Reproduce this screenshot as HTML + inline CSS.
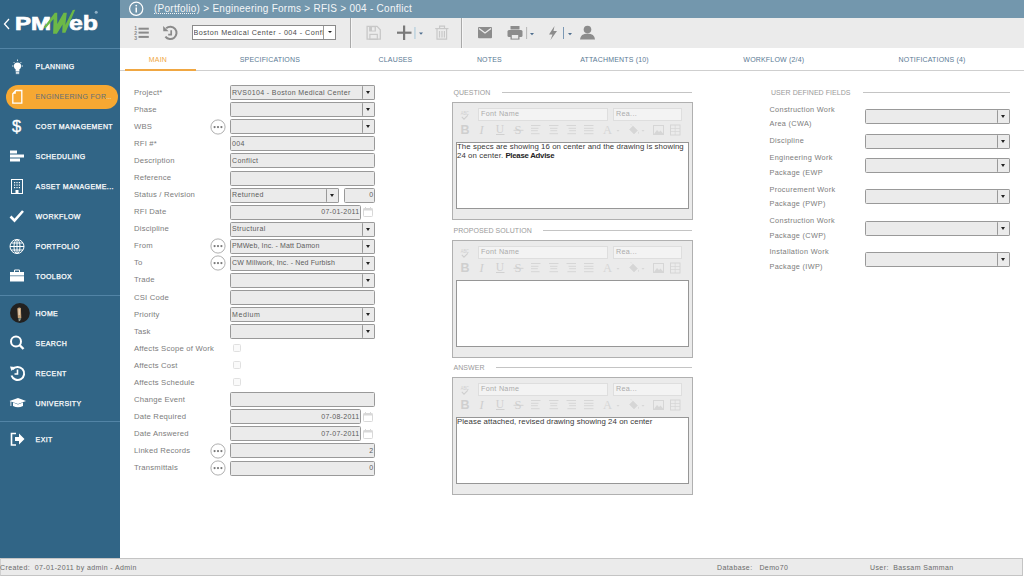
<!DOCTYPE html>
<html><head><meta charset="utf-8"><title>PMWeb RFI</title>
<style>
*{box-sizing:border-box;margin:0;padding:0}
html,body{width:1024px;height:576px;overflow:hidden;background:#fff;font-family:"Liberation Sans",sans-serif;}
.abs{position:absolute}
#side{position:absolute;left:0;top:0;width:120px;height:558px;background:#316586}
.hr{position:absolute;left:0;width:120px;height:1px;background:#5284a6}
.mi{position:absolute;left:35.6px;font-size:7px;font-weight:normal;-webkit-text-stroke:0.25px #fff;color:#fff;letter-spacing:0.4px;white-space:nowrap;line-height:10px}
.ic{position:absolute}
#hdr{position:absolute;left:120px;top:0;width:904px;height:18px;background:#7397ad}
#tb{position:absolute;left:120px;top:18px;width:904px;height:30px;background:#ebebeb}
#tabs{position:absolute;left:120px;top:48px;width:904px;height:23px;background:#fff;border-bottom:1px solid #cfcfcf}
.tab{position:absolute;top:54.7px;font-size:7px;color:#5a7a94;letter-spacing:0.18px;white-space:nowrap;line-height:10px}
.lbl{position:absolute;left:134px;font-size:7.7px;color:#7c7c7c;white-space:nowrap;line-height:10px;letter-spacing:0.2px}
.inp{position:absolute;height:15px;background:#ebebeb;border:1px solid #999;border-radius:1.5px}
.inp span{position:absolute;left:1px;top:1.6px;font-size:7px;color:#5c5c5c;line-height:10px;white-space:nowrap;letter-spacing:0.38px}
.inp span.r{left:auto;right:0.5px;letter-spacing:0.3px}
.dd{position:absolute;top:-1px;right:-1px;width:13px;height:15px;border:1px solid #999;border-radius:1.5px}
.dd:after{content:"";position:absolute;left:3.2px;top:5px;border-left:2.8px solid transparent;border-right:2.8px solid transparent;border-top:3px solid #222}
.ell{position:absolute;left:211px;width:15px;height:15px;border:1px solid #b4b4b4;border-radius:50%;background:#fff}
.ell i{position:absolute;top:5.6px;width:2.1px;height:2.1px;border-radius:50%;background:#7a7a7a}
.cb{position:absolute;left:233px;width:8px;height:8px;border:1px solid #e0e0e0;border-radius:1.5px;background:#fafafa}
.cal{position:absolute;left:363px;width:10px;height:10px}
.sec{position:absolute;font-size:7px;color:#9a9a9a;letter-spacing:0.05px;white-space:nowrap;line-height:10px}
.secl{position:absolute;height:1px;background:#c4c4c4}
.ed{position:absolute;left:452px;width:241px;height:118px;background:#ebebeb;border:1px solid #b0b0b0}
.fn{position:absolute;top:5px;height:13px;border:1px solid #dedede;background:#f3f3f3;font-size:7.2px;color:#acacac;line-height:10.6px;padding-left:2px;white-space:nowrap;letter-spacing:0.3px}
.ta{position:absolute;left:3px;top:38.5px;width:233px;height:67px;background:#fff;border:1px solid #969696}
.ta p{position:absolute;left:0px;top:0.6px;font-size:7.8px;line-height:8.75px;color:#383838;white-space:nowrap;letter-spacing:0.08px}
.udl{position:absolute;left:769.5px;font-size:7.3px;color:#7c7c7c;white-space:nowrap;line-height:14.5px;letter-spacing:0.33px}
#foot{position:absolute;left:0;top:558px;width:1023px;height:18px;background:#ebebeb;border:1px solid #c4c4c4;border-left-color:#d0d0d0}
.ft{position:absolute;top:5px;font-size:7px;color:#6a6a6a;white-space:nowrap;line-height:9px;letter-spacing:0.4px}
</style></head><body>

<div id="side">
<svg class="abs" style="left:0;top:0" width="120" height="48" viewBox="0 0 120 48">
<path d="M9 19 L4.5 24 L9 29" fill="none" stroke="#fff" stroke-width="1.3"/>
<text x="15" y="29.7" font-family="Liberation Sans" font-weight="bold" font-size="18.3" fill="#fff" stroke="#fff" stroke-width="0.7" textLength="36" lengthAdjust="spacingAndGlyphs">PM</text>
<text x="69" y="29.7" font-family="Liberation Sans" font-weight="bold" font-size="20.5" fill="#fff" stroke="#fff" stroke-width="0.6" textLength="29" lengthAdjust="spacingAndGlyphs">eb</text>
<path d="M43.8 27.2 L54.8 12.8 L57.2 12.8 L57.3 24 L63.6 12.8 L66.8 12.8 L65.3 25 L72.8 10 L75.2 9.8 L65.4 32.8 L62.2 32.8 L62.6 24.5 L56.9 33.8 L53.1 33.8 L53.6 19 L45.4 28.4 Z" fill="#6cb847"/>
<circle cx="96.2" cy="12.2" r="1.5" fill="#8fb0c6"/>
</svg>
<div class="hr" style="top:48px"></div>
<div class="abs" style="left:6px;top:85px;width:112px;height:24px;border-radius:12px;background:#f6a832"></div>
<div class="mi" style="top:62.0px;color:#fff;">PLANNING</div>
<div class="mi" style="top:92.0px;color:#667078;-webkit-text-stroke:0.05px #667078;letter-spacing:0.33px;">ENGINEERING FOR<span style="color:#f3e6d0;letter-spacing:-0.3px">...</span></div>
<div class="mi" style="top:122.0px;color:#fff;">COST MANAGEMENT</div>
<div class="mi" style="top:152.0px;color:#fff;">SCHEDULING</div>
<div class="mi" style="top:182.0px;color:#fff;">ASSET MANAGEME...</div>
<div class="mi" style="top:212.0px;color:#fff;">WORKFLOW</div>
<div class="mi" style="top:242.0px;color:#fff;">PORTFOLIO</div>
<div class="mi" style="top:272.0px;color:#fff;">TOOLBOX</div>
<div class="mi" style="top:308.5px;color:#fff;">HOME</div>
<div class="mi" style="top:338.5px;color:#fff;">SEARCH</div>
<div class="mi" style="top:368.5px;color:#fff;">RECENT</div>
<div class="mi" style="top:398.5px;color:#fff;">UNIVERSITY</div>
<div class="mi" style="top:435.0px;color:#fff;">EXIT</div>
<div class="hr" style="top:295px"></div>
<div class="hr" style="top:421px"></div>
<svg class="abs" style="left:0;top:0" width="120" height="460" viewBox="0 0 120 460">
<g fill="#fff" stroke="none">
<!-- bulb -->
<circle cx="17.5" cy="66" r="3.6"/>
<rect x="15.6" y="68" width="3.8" height="3.5"/>
<rect x="15.8" y="72" width="3.4" height="0.8"/><rect x="15.8" y="73.3" width="3.4" height="0.8"/>
<g stroke="#fff" stroke-width="0.8"><path d="M17.5 59.5v1.6M12 66h1.5M21.5 66H23M13.6 62l1 1M21.4 62l-1 1"/></g>
<!-- doc -->
<path d="M15.8 90.5 h6 v12.6 h-9 v-9.3 z" fill="none" stroke="#fff" stroke-width="1.3" stroke-linejoin="miter"/><path d="M12.8 93.8 h3 v-3.3 z" fill="#fff"/>
<!-- $ -->
<text x="12" y="132" font-family="Liberation Sans" font-size="16.5" fill="#fff" stroke="#fff" stroke-width="0.35">$</text>
<!-- scheduling -->
<rect x="10" y="150.5" width="7" height="3"/><rect x="10" y="154.5" width="14" height="3"/><rect x="10" y="158.5" width="10" height="3"/>
<!-- asset building -->
<rect x="11.5" y="179.5" width="11" height="14" fill="none" stroke="#fff" stroke-width="1"/>
<g fill="#fff"><rect x="14" y="182" width="1.2" height="1.2"/><rect x="16.4" y="182" width="1.2" height="1.2"/><rect x="18.8" y="182" width="1.2" height="1.2"/>
<rect x="14" y="184.5" width="1.2" height="1.2"/><rect x="16.4" y="184.5" width="1.2" height="1.2"/><rect x="18.8" y="184.5" width="1.2" height="1.2"/>
<rect x="14" y="187" width="1.2" height="1.2"/><rect x="16.4" y="187" width="1.2" height="1.2"/><rect x="18.8" y="187" width="1.2" height="1.2"/>
<rect x="15.5" y="190" width="3" height="3.5"/></g>
<!-- check -->
<path d="M10.5 216.5 L14.5 220.5 L23 211" fill="none" stroke="#fff" stroke-width="2.6"/>
<!-- globe -->
<g fill="none" stroke="#fff" stroke-width="1"><circle cx="17" cy="246.5" r="7"/><ellipse cx="17" cy="246.5" rx="3" ry="7"/><path d="M10 246.5h14M11 243h12M11 250h12M17 239.5v14"/></g>
<!-- toolbox -->
<rect x="10" y="272" width="14" height="9.5"/><path d="M14.5 272v-2h5v2" fill="none" stroke="#fff" stroke-width="1"/>
<rect x="10" y="275.5" width="14" height="0.7" fill="#316586"/>
<!-- home avatar -->
<circle cx="19.9" cy="313" r="9.9" fill="#222120"/>
<path d="M17.3 308.5 q1.8-1.6 3.6 -0.4 l0.4 10 h-3.4 z" fill="#c8a57c"/>
<path d="M18.5 309 h1.5 v6 h-1.5z" fill="#e2cdb4"/>
<path d="M18.3 318.3 h3 l-1 2 l-1.5 1.3 z" fill="#8a9a90"/>
<!-- search -->
<circle cx="16" cy="341.5" r="5" fill="none" stroke="#fff" stroke-width="2"/><path d="M19.5 345 L23.5 349" stroke="#fff" stroke-width="2.4"/>
<!-- recent -->
<path d="M12.5 369.5 A6.5 6.5 0 1 1 11.5 375.5" fill="none" stroke="#fff" stroke-width="2"/>
<path d="M10 366.5 L15 367 L11.5 371 z"/>
<path d="M17.5 369.5 v4.5 h-3" fill="none" stroke="#fff" stroke-width="1.6"/>
<!-- university -->
<path d="M9.5 401 L18 398 L26 401 L18 404 z"/><path d="M13 402.5 v3.5 q5 2.5 10 0 v-3.5 l-5 2 z"/><rect x="10.5" y="401" width="0.8" height="5"/>
<!-- exit -->
<path d="M16 433.5 h-4.5 v11.5 h4.5" fill="none" stroke="#fff" stroke-width="1.6"/>
<path d="M15 437 h4 v-3.5 l5.5 5.5 l-5.5 5.5 v-3.5 h-4 z"/>
</g></svg>
</div>
<div id="hdr"></div>
<svg class="abs" style="left:128px;top:1px" width="16" height="16" viewBox="0 0 16 16"><circle cx="8.2" cy="7.8" r="6.6" fill="none" stroke="#fff" stroke-width="1.2"/><rect x="7.5" y="6.5" width="1.5" height="5" fill="#fff"/><circle cx="8.25" cy="4.6" r="0.9" fill="#fff"/></svg>
<div class="abs" style="left:154px;top:3.2px;font-size:10px;line-height:12px;color:#f4f6f8;white-space:nowrap;letter-spacing:0.26px"><span style="text-decoration:underline dotted;text-underline-offset:1px">(Portfolio)</span> &gt; Engineering Forms &gt; RFIS &gt; 004 - Conflict</div>
<div id="tb"></div>
<svg class="abs" style="left:120px;top:18px" width="904" height="30" viewBox="120 18 904 30">
<!-- numbered list -->
<g fill="#8a8a8a"><rect x="138.5" y="27.7" width="10.3" height="2"/><rect x="138.5" y="31.6" width="10.3" height="2"/><rect x="138.5" y="35.9" width="10.3" height="2"/>
<g font-family="Liberation Sans" font-weight="bold" font-size="5.6"><text x="134.3" y="30" textLength="2.8" lengthAdjust="spacingAndGlyphs">1</text><text x="134.3" y="34.9" textLength="2.8" lengthAdjust="spacingAndGlyphs">2</text><text x="134.3" y="39.9" textLength="2.8" lengthAdjust="spacingAndGlyphs">3</text></g></g>
<!-- history -->
<path d="M166.2 28.2 A6.2 6.2 0 1 1 165.4 36.6" fill="none" stroke="#8a8a8a" stroke-width="2"/>
<path d="M163.1 25.9 L163.3 31.3 L168.6 31.3 z" fill="#8a8a8a"/>
<path d="M171.2 30.2 V34.6 H168.2" fill="none" stroke="#8a8a8a" stroke-width="1.7"/>
<!-- separators -->
<rect x="350" y="18" width="1" height="30" fill="#a9a9a9"/><rect x="351" y="18" width="1" height="30" fill="#f6f6f6"/>
<rect x="461" y="18" width="1" height="30" fill="#a9a9a9"/><rect x="462" y="18" width="1" height="30" fill="#f6f6f6"/>
<!-- save -->
<path d="M367.1 26.3 h10 l3.2 3.4 v9.4 h-13.2 z" fill="none" stroke="#c8c8c8" stroke-width="1.3"/>
<rect x="369.1" y="26.3" width="6.8" height="5.2" fill="#c8c8c8"/><rect x="372" y="27.2" width="2.6" height="3.4" fill="#ececec"/>
<rect x="369.9" y="34.4" width="7.4" height="5" fill="none" stroke="#c8c8c8" stroke-width="1.2"/>
<!-- plus -->
<rect x="403" y="25.5" width="2.2" height="14.5" fill="#7a7a7a"/><rect x="397" y="31.6" width="14.5" height="2.2" fill="#7a7a7a"/>
<rect x="414.5" y="27" width="0.9" height="12" fill="#9fc4d8"/>
<path d="M419 32.5 h4 l-2 2.2 z" fill="#4f6f8f"/>
<!-- trash -->
<g fill="none" stroke="#c8c8c8" stroke-width="1.2"><path d="M435.2 28.6 h13.3"/><path d="M439.6 28.6 v-2.4 h4.9 v2.4"/><path d="M437 29 v10.2 h9.6 v-10.2"/><path d="M439.5 31 v6.6 M442 31 v6.6 M444.4 31 v6.6"/></g>
<!-- mail -->
<rect x="478" y="27" width="14" height="11.2" rx="1" fill="#8c8c8c"/>
<path d="M479 28.5 L485 33 L491 28.5" fill="none" stroke="#ebebeb" stroke-width="1.3"/>
<!-- printer -->
<rect x="510.5" y="26" width="9" height="3.5" fill="#8c8c8c"/>
<rect x="507.5" y="30" width="15" height="7" rx="1.5" fill="#8c8c8c"/>
<rect x="510.5" y="34" width="9" height="5.6" fill="#8c8c8c"/><rect x="511.8" y="35" width="6.4" height="3.6" fill="#ebebeb"/>
<rect x="526.2" y="27" width="0.9" height="12" fill="#b0b0b0"/>
<path d="M530 33 h4 l-2 2.2 z" fill="#4f6f8f"/>
<!-- bolt -->
<path d="M554.5 26 L549 34.5 h3.5 L550.5 40 L557 31 h-3.5 z" fill="#8c8c8c"/>
<rect x="563.1" y="27" width="0.9" height="12" fill="#6f8fae"/>
<path d="M568 33 h4 l-2 2.2 z" fill="#4f6f8f"/>
<!-- person -->
<circle cx="587.5" cy="29.5" r="3.8" fill="#8c8c8c"/>
<path d="M580 39.6 q0.5-6 7.5-6 q7 0 7.5 6 z" fill="#8c8c8c"/>
</svg>
<div class="abs" style="left:192px;top:25px;width:144px;height:15px;background:#fff;border:1px solid #8a8a8a"><span style="position:absolute;left:0.5px;top:2.2px;font-size:7.2px;line-height:10px;color:#4a4a4a;white-space:nowrap;letter-spacing:0.47px;width:130px;overflow:hidden">Boston Medical Center - 004 - Conflict</span><div style="position:absolute;right:0;top:0;width:12px;height:13px;border-left:1px solid #999;background:#fff"></div><div style="position:absolute;right:3.5px;top:5px;border-left:2.3px solid transparent;border-right:2.3px solid transparent;border-top:2.8px solid #222"></div></div>
<div id="tabs"></div>
<div class="abs" style="left:125px;top:69px;width:71px;height:2px;background:#f0a742"></div>
<div class="tab" style="left:57.900000000000006px;width:200px;text-align:center;color:#f0a742;">MAIN</div>
<div class="tab" style="left:169.89999999999998px;width:200px;text-align:center;">SPECIFICATIONS</div>
<div class="tab" style="left:295.5px;width:200px;text-align:center;">CLAUSES</div>
<div class="tab" style="left:389.4px;width:200px;text-align:center;">NOTES</div>
<div class="tab" style="left:514.5px;width:200px;text-align:center;">ATTACHMENTS (10)</div>
<div class="tab" style="left:673.8px;width:200px;text-align:center;">WORKFLOW (2/4)</div>
<div class="tab" style="left:832.1px;width:200px;text-align:center;">NOTIFICATIONS (4)</div>
<div class="lbl" style="top:87.8px">Project*</div>
<div class="inp" style="left:230px;top:85.2px;width:145px"><span class="" style="">RVS0104 - Boston Medical Center</span><div class="dd"></div></div>
<div class="lbl" style="top:104.86px">Phase</div>
<div class="inp" style="left:230px;top:102.26px;width:145px"><div class="dd"></div></div>
<div class="lbl" style="top:121.91999999999999px">WBS</div>
<svg class="abs" style="left:210.1px;top:118.72px" width="16" height="16" viewBox="0 0 16 16"><circle cx="8" cy="8" r="7.1" fill="#fff" stroke="#b0b0b0" stroke-width="1"/><g fill="#787878"><circle cx="4.6" cy="8.1" r="1.1"/><circle cx="8" cy="8.1" r="1.1"/><circle cx="11.4" cy="8.1" r="1.1"/></g></svg>
<div class="inp" style="left:230px;top:119.32px;width:145px"><div class="dd"></div></div>
<div class="lbl" style="top:138.98px">RFI #*</div>
<div class="inp" style="left:230px;top:136.38px;width:145px"><span class="" style="">004</span></div>
<div class="lbl" style="top:156.04px">Description</div>
<div class="inp" style="left:230px;top:153.44px;width:145px"><span class="" style="">Conflict</span></div>
<div class="lbl" style="top:173.1px">Reference</div>
<div class="inp" style="left:230px;top:170.5px;width:145px"></div>
<div class="lbl" style="top:190.16px">Status / Revision</div>
<div class="inp" style="left:230px;top:187.56px;width:109px"><span class="" style="">Returned</span><div class="dd"></div></div>
<div class="inp" style="left:344px;top:187.56px;width:31px"><span class="r" style="right:0.5px">0</span></div>
<div class="lbl" style="top:207.22px">RFI Date</div>
<div class="inp" style="left:230px;top:204.62px;width:131px"><span class="r" style="right:0.5px">07-01-2011</span></div>
<svg class="cal" style="top:207.42000000000002px" width="10" height="10" viewBox="0 0 10 10"><rect x="0.5" y="1.5" width="9" height="8" rx="0.8" fill="#fff" stroke="#d8d8d8" stroke-width="1"/><rect x="0.5" y="1.5" width="9" height="2" fill="#d8d8d8"/><rect x="2" y="0" width="1" height="2.5" fill="#d8d8d8"/><rect x="7" y="0" width="1" height="2.5" fill="#d8d8d8"/></svg>
<div class="lbl" style="top:224.28px">Discipline</div>
<div class="inp" style="left:230px;top:221.68px;width:145px"><span class="" style="">Structural</span><div class="dd"></div></div>
<div class="lbl" style="top:241.34px">From</div>
<svg class="abs" style="left:210.1px;top:238.14000000000001px" width="16" height="16" viewBox="0 0 16 16"><circle cx="8" cy="8" r="7.1" fill="#fff" stroke="#b0b0b0" stroke-width="1"/><g fill="#787878"><circle cx="4.6" cy="8.1" r="1.1"/><circle cx="8" cy="8.1" r="1.1"/><circle cx="11.4" cy="8.1" r="1.1"/></g></svg>
<div class="inp" style="left:230px;top:238.74px;width:145px"><span class="" style="letter-spacing:0.13px;">PMWeb, Inc. - Matt Damon</span><div class="dd"></div></div>
<div class="lbl" style="top:258.40000000000003px">To</div>
<svg class="abs" style="left:210.1px;top:255.20000000000002px" width="16" height="16" viewBox="0 0 16 16"><circle cx="8" cy="8" r="7.1" fill="#fff" stroke="#b0b0b0" stroke-width="1"/><g fill="#787878"><circle cx="4.6" cy="8.1" r="1.1"/><circle cx="8" cy="8.1" r="1.1"/><circle cx="11.4" cy="8.1" r="1.1"/></g></svg>
<div class="inp" style="left:230px;top:255.8px;width:145px"><span class="" style="letter-spacing:0.15px;">CW Millwork, Inc. - Ned Furbish</span><div class="dd"></div></div>
<div class="lbl" style="top:275.46000000000004px">Trade</div>
<div class="inp" style="left:230px;top:272.86px;width:145px"><div class="dd"></div></div>
<div class="lbl" style="top:292.52000000000004px">CSI Code</div>
<div class="inp" style="left:230px;top:289.92px;width:145px"></div>
<div class="lbl" style="top:309.58000000000004px">Priority</div>
<div class="inp" style="left:230px;top:306.98px;width:145px"><span class="" style="letter-spacing:0.6px;">Medium</span><div class="dd"></div></div>
<div class="lbl" style="top:326.64000000000004px">Task</div>
<div class="inp" style="left:230px;top:324.04px;width:145px"><div class="dd"></div></div>
<div class="lbl" style="top:343.70000000000005px">Affects Scope of Work</div>
<div class="cb" style="top:344.1px"></div>
<div class="lbl" style="top:360.76000000000005px">Affects Cost</div>
<div class="cb" style="top:361.16px"></div>
<div class="lbl" style="top:377.82000000000005px">Affects Schedule</div>
<div class="cb" style="top:378.22px"></div>
<div class="lbl" style="top:394.88px">Change Event</div>
<div class="inp" style="left:230px;top:392.28px;width:145px"></div>
<div class="lbl" style="top:411.94px">Date Required</div>
<div class="inp" style="left:230px;top:409.34px;width:131px"><span class="r" style="right:0.5px">07-08-2011</span></div>
<svg class="cal" style="top:412.14px" width="10" height="10" viewBox="0 0 10 10"><rect x="0.5" y="1.5" width="9" height="8" rx="0.8" fill="#fff" stroke="#d8d8d8" stroke-width="1"/><rect x="0.5" y="1.5" width="9" height="2" fill="#d8d8d8"/><rect x="2" y="0" width="1" height="2.5" fill="#d8d8d8"/><rect x="7" y="0" width="1" height="2.5" fill="#d8d8d8"/></svg>
<div class="lbl" style="top:429.0px">Date Answered</div>
<div class="inp" style="left:230px;top:426.4px;width:131px"><span class="r" style="right:0.5px">07-07-2011</span></div>
<svg class="cal" style="top:429.2px" width="10" height="10" viewBox="0 0 10 10"><rect x="0.5" y="1.5" width="9" height="8" rx="0.8" fill="#fff" stroke="#d8d8d8" stroke-width="1"/><rect x="0.5" y="1.5" width="9" height="2" fill="#d8d8d8"/><rect x="2" y="0" width="1" height="2.5" fill="#d8d8d8"/><rect x="7" y="0" width="1" height="2.5" fill="#d8d8d8"/></svg>
<div class="lbl" style="top:446.06px">Linked Records</div>
<svg class="abs" style="left:210.1px;top:442.85999999999996px" width="16" height="16" viewBox="0 0 16 16"><circle cx="8" cy="8" r="7.1" fill="#fff" stroke="#b0b0b0" stroke-width="1"/><g fill="#787878"><circle cx="4.6" cy="8.1" r="1.1"/><circle cx="8" cy="8.1" r="1.1"/><circle cx="11.4" cy="8.1" r="1.1"/></g></svg>
<div class="inp" style="left:230px;top:443.46px;width:145px"><span class="r" style="right:0.5px">2</span></div>
<div class="lbl" style="top:463.12px">Transmittals</div>
<svg class="abs" style="left:210.1px;top:459.91999999999996px" width="16" height="16" viewBox="0 0 16 16"><circle cx="8" cy="8" r="7.1" fill="#fff" stroke="#b0b0b0" stroke-width="1"/><g fill="#787878"><circle cx="4.6" cy="8.1" r="1.1"/><circle cx="8" cy="8.1" r="1.1"/><circle cx="11.4" cy="8.1" r="1.1"/></g></svg>
<div class="inp" style="left:230px;top:460.52px;width:145px"><span class="r" style="right:0.5px">0</span></div>
<div class="sec" style="left:453.5px;top:87.6px">QUESTION</div>
<div class="secl" style="left:502px;top:92px;width:190px"></div>
<div class="ed" style="top:102px">
<div class="fn" style="left:25px;width:130px">Font Name</div>
<div class="fn" style="left:160px;width:69px">Rea...</div>
<svg class="abs" style="left:0;top:0" width="241" height="40" viewBox="452 0 241 40"><g fill="#cfcfcf" font-family="Liberation Serif"><text x="459.8" y="11.5" font-size="4.6" font-family="Liberation Sans" textLength="8" lengthAdjust="spacingAndGlyphs">ABC</text><path d="M460.8 13.8 l2.2 2.3 l3.8-3.8" fill="none" stroke="#cfcfcf" stroke-width="1.1"/><text x="459.5" y="31" font-size="12.5" font-weight="bold" font-family="Liberation Sans">B</text><text x="478.5" y="31" font-size="12.5" font-style="italic">I</text><text x="494.8" y="29.5" font-size="11.5">U</text><rect x="495" y="31" width="8.5" height="0.9"/><text x="513.5" y="31.3" font-size="12.5">S</text><rect x="512.5" y="26.8" width="10" height="0.9"/></g><g fill="#d6d6d6">
<rect x="530" y="22" width="9.5" height="1"/>
<rect x="530" y="24.8" width="7.5" height="1"/>
<rect x="530" y="27.2" width="6.8" height="1"/>
<rect x="530" y="30.2" width="8.6" height="1"/>
<rect x="548.0" y="22" width="9.5" height="1"/>
<rect x="549.0" y="24.8" width="7.5" height="1"/>
<rect x="549.35" y="27.2" width="6.8" height="1"/>
<rect x="548.45" y="30.2" width="8.6" height="1"/>
<rect x="565.5" y="22" width="9.5" height="1"/>
<rect x="567.5" y="24.8" width="7.5" height="1"/>
<rect x="568.2" y="27.2" width="6.8" height="1"/>
<rect x="566.4" y="30.2" width="8.6" height="1"/>
<rect x="583" y="22" width="9.5" height="1"/>
<rect x="583" y="24.8" width="9.5" height="1"/>
<rect x="583" y="27.2" width="9.5" height="1"/>
<rect x="583" y="30.2" width="9.5" height="1"/>
<text x="602" y="31" font-size="12.5" font-family="Liberation Serif">A</text><path d="M615.5 27 h3 l-1.5 1.8z"/><path d="M628.5 26.5 l3.5-3.5 l4.5 4.5 l-3.5 3.5 z M631 22.5 l-1.5-1.5" stroke="#d6d6d6" stroke-width="0.6"/><path d="M637.5 28.5 q1 1.5 0 2.5 q-1-1 0-2.5z"/><path d="M640.5 27 h3 l-1.5 1.8z"/><rect x="652.5" y="22.5" width="10" height="9" fill="none" stroke="#d6d6d6" stroke-width="1"/><path d="M653 31 l3-4 l2 2 l1.5-1.5 l3 3.5z"/><rect x="669.5" y="22" width="9.5" height="10" fill="none" stroke="#d6d6d6" stroke-width="1"/><path d="M669.5 25.5h9.5M669.5 28.5h9.5M674.2 22v10" stroke="#d6d6d6" stroke-width="0.7" fill="none"/></g></svg>
<div class="ta"><p>The specs are showing 16 on center and the drawing is showing<br>24 on center. <b style="letter-spacing:-0.25px;color:#222">Please Advise</b></p></div>
</div>
<div class="sec" style="left:453.5px;top:225.6px">PROPOSED SOLUTION</div>
<div class="secl" style="left:543px;top:230px;width:149px"></div>
<div class="ed" style="top:240px">
<div class="fn" style="left:25px;width:130px">Font Name</div>
<div class="fn" style="left:160px;width:69px">Rea...</div>
<svg class="abs" style="left:0;top:0" width="241" height="40" viewBox="452 0 241 40"><g fill="#cfcfcf" font-family="Liberation Serif"><text x="459.8" y="11.5" font-size="4.6" font-family="Liberation Sans" textLength="8" lengthAdjust="spacingAndGlyphs">ABC</text><path d="M460.8 13.8 l2.2 2.3 l3.8-3.8" fill="none" stroke="#cfcfcf" stroke-width="1.1"/><text x="459.5" y="31" font-size="12.5" font-weight="bold" font-family="Liberation Sans">B</text><text x="478.5" y="31" font-size="12.5" font-style="italic">I</text><text x="494.8" y="29.5" font-size="11.5">U</text><rect x="495" y="31" width="8.5" height="0.9"/><text x="513.5" y="31.3" font-size="12.5">S</text><rect x="512.5" y="26.8" width="10" height="0.9"/></g><g fill="#d6d6d6">
<rect x="530" y="22" width="9.5" height="1"/>
<rect x="530" y="24.8" width="7.5" height="1"/>
<rect x="530" y="27.2" width="6.8" height="1"/>
<rect x="530" y="30.2" width="8.6" height="1"/>
<rect x="548.0" y="22" width="9.5" height="1"/>
<rect x="549.0" y="24.8" width="7.5" height="1"/>
<rect x="549.35" y="27.2" width="6.8" height="1"/>
<rect x="548.45" y="30.2" width="8.6" height="1"/>
<rect x="565.5" y="22" width="9.5" height="1"/>
<rect x="567.5" y="24.8" width="7.5" height="1"/>
<rect x="568.2" y="27.2" width="6.8" height="1"/>
<rect x="566.4" y="30.2" width="8.6" height="1"/>
<rect x="583" y="22" width="9.5" height="1"/>
<rect x="583" y="24.8" width="9.5" height="1"/>
<rect x="583" y="27.2" width="9.5" height="1"/>
<rect x="583" y="30.2" width="9.5" height="1"/>
<text x="602" y="31" font-size="12.5" font-family="Liberation Serif">A</text><path d="M615.5 27 h3 l-1.5 1.8z"/><path d="M628.5 26.5 l3.5-3.5 l4.5 4.5 l-3.5 3.5 z M631 22.5 l-1.5-1.5" stroke="#d6d6d6" stroke-width="0.6"/><path d="M637.5 28.5 q1 1.5 0 2.5 q-1-1 0-2.5z"/><path d="M640.5 27 h3 l-1.5 1.8z"/><rect x="652.5" y="22.5" width="10" height="9" fill="none" stroke="#d6d6d6" stroke-width="1"/><path d="M653 31 l3-4 l2 2 l1.5-1.5 l3 3.5z"/><rect x="669.5" y="22" width="9.5" height="10" fill="none" stroke="#d6d6d6" stroke-width="1"/><path d="M669.5 25.5h9.5M669.5 28.5h9.5M674.2 22v10" stroke="#d6d6d6" stroke-width="0.7" fill="none"/></g></svg>
<div class="ta"><p></p></div>
</div>
<div class="sec" style="left:453.5px;top:362.6px">ANSWER</div>
<div class="secl" style="left:496px;top:367px;width:196px"></div>
<div class="ed" style="top:377px">
<div class="fn" style="left:25px;width:130px">Font Name</div>
<div class="fn" style="left:160px;width:69px">Rea...</div>
<svg class="abs" style="left:0;top:0" width="241" height="40" viewBox="452 0 241 40"><g fill="#cfcfcf" font-family="Liberation Serif"><text x="459.8" y="11.5" font-size="4.6" font-family="Liberation Sans" textLength="8" lengthAdjust="spacingAndGlyphs">ABC</text><path d="M460.8 13.8 l2.2 2.3 l3.8-3.8" fill="none" stroke="#cfcfcf" stroke-width="1.1"/><text x="459.5" y="31" font-size="12.5" font-weight="bold" font-family="Liberation Sans">B</text><text x="478.5" y="31" font-size="12.5" font-style="italic">I</text><text x="494.8" y="29.5" font-size="11.5">U</text><rect x="495" y="31" width="8.5" height="0.9"/><text x="513.5" y="31.3" font-size="12.5">S</text><rect x="512.5" y="26.8" width="10" height="0.9"/></g><g fill="#d6d6d6">
<rect x="530" y="22" width="9.5" height="1"/>
<rect x="530" y="24.8" width="7.5" height="1"/>
<rect x="530" y="27.2" width="6.8" height="1"/>
<rect x="530" y="30.2" width="8.6" height="1"/>
<rect x="548.0" y="22" width="9.5" height="1"/>
<rect x="549.0" y="24.8" width="7.5" height="1"/>
<rect x="549.35" y="27.2" width="6.8" height="1"/>
<rect x="548.45" y="30.2" width="8.6" height="1"/>
<rect x="565.5" y="22" width="9.5" height="1"/>
<rect x="567.5" y="24.8" width="7.5" height="1"/>
<rect x="568.2" y="27.2" width="6.8" height="1"/>
<rect x="566.4" y="30.2" width="8.6" height="1"/>
<rect x="583" y="22" width="9.5" height="1"/>
<rect x="583" y="24.8" width="9.5" height="1"/>
<rect x="583" y="27.2" width="9.5" height="1"/>
<rect x="583" y="30.2" width="9.5" height="1"/>
<text x="602" y="31" font-size="12.5" font-family="Liberation Serif">A</text><path d="M615.5 27 h3 l-1.5 1.8z"/><path d="M628.5 26.5 l3.5-3.5 l4.5 4.5 l-3.5 3.5 z M631 22.5 l-1.5-1.5" stroke="#d6d6d6" stroke-width="0.6"/><path d="M637.5 28.5 q1 1.5 0 2.5 q-1-1 0-2.5z"/><path d="M640.5 27 h3 l-1.5 1.8z"/><rect x="652.5" y="22.5" width="10" height="9" fill="none" stroke="#d6d6d6" stroke-width="1"/><path d="M653 31 l3-4 l2 2 l1.5-1.5 l3 3.5z"/><rect x="669.5" y="22" width="9.5" height="10" fill="none" stroke="#d6d6d6" stroke-width="1"/><path d="M669.5 25.5h9.5M669.5 28.5h9.5M674.2 22v10" stroke="#d6d6d6" stroke-width="0.7" fill="none"/></g></svg>
<div class="ta"><p>Please attached, revised drawing showing 24 on center</p></div>
</div>
<div class="sec" style="left:771px;top:87.8px">USER DEFINED FIELDS</div>
<div class="secl" style="left:863px;top:92px;width:147px"></div>
<div class="udl" style="top:102.6px">Construction Work<br>Area (CWA)</div>
<div class="inp" style="left:865px;top:109.0px;width:145px"><div class="dd"></div></div>
<div class="udl" style="top:134.35px">Discipline</div>
<div class="inp" style="left:865px;top:133.5px;width:145px"><div class="dd"></div></div>
<div class="udl" style="top:151.1px">Engineering Work<br>Package (EWP</div>
<div class="inp" style="left:865px;top:157.5px;width:145px"><div class="dd"></div></div>
<div class="udl" style="top:182.6px">Procurement Work<br>Package (PWP)</div>
<div class="inp" style="left:865px;top:189.0px;width:145px"><div class="dd"></div></div>
<div class="udl" style="top:214.1px">Construction Work<br>Package (CWP)</div>
<div class="inp" style="left:865px;top:220.5px;width:145px"><div class="dd"></div></div>
<div class="udl" style="top:245.1px">Installation Work<br>Package (IWP)</div>
<div class="inp" style="left:865px;top:251.5px;width:145px"><div class="dd"></div></div>
<div id="foot"></div>
<div class="ft" style="left:0;top:563px">Created:&nbsp; 07-01-2011 by admin - Admin</div>
<div class="ft" style="left:717px;top:563px">Database:</div>
<div class="ft" style="left:759.4px;top:563px">Demo70</div>
<div class="ft" style="left:870px;top:563px">User:</div>
<div class="ft" style="left:893.2px;top:563px">Bassam Samman</div>
</body></html>
